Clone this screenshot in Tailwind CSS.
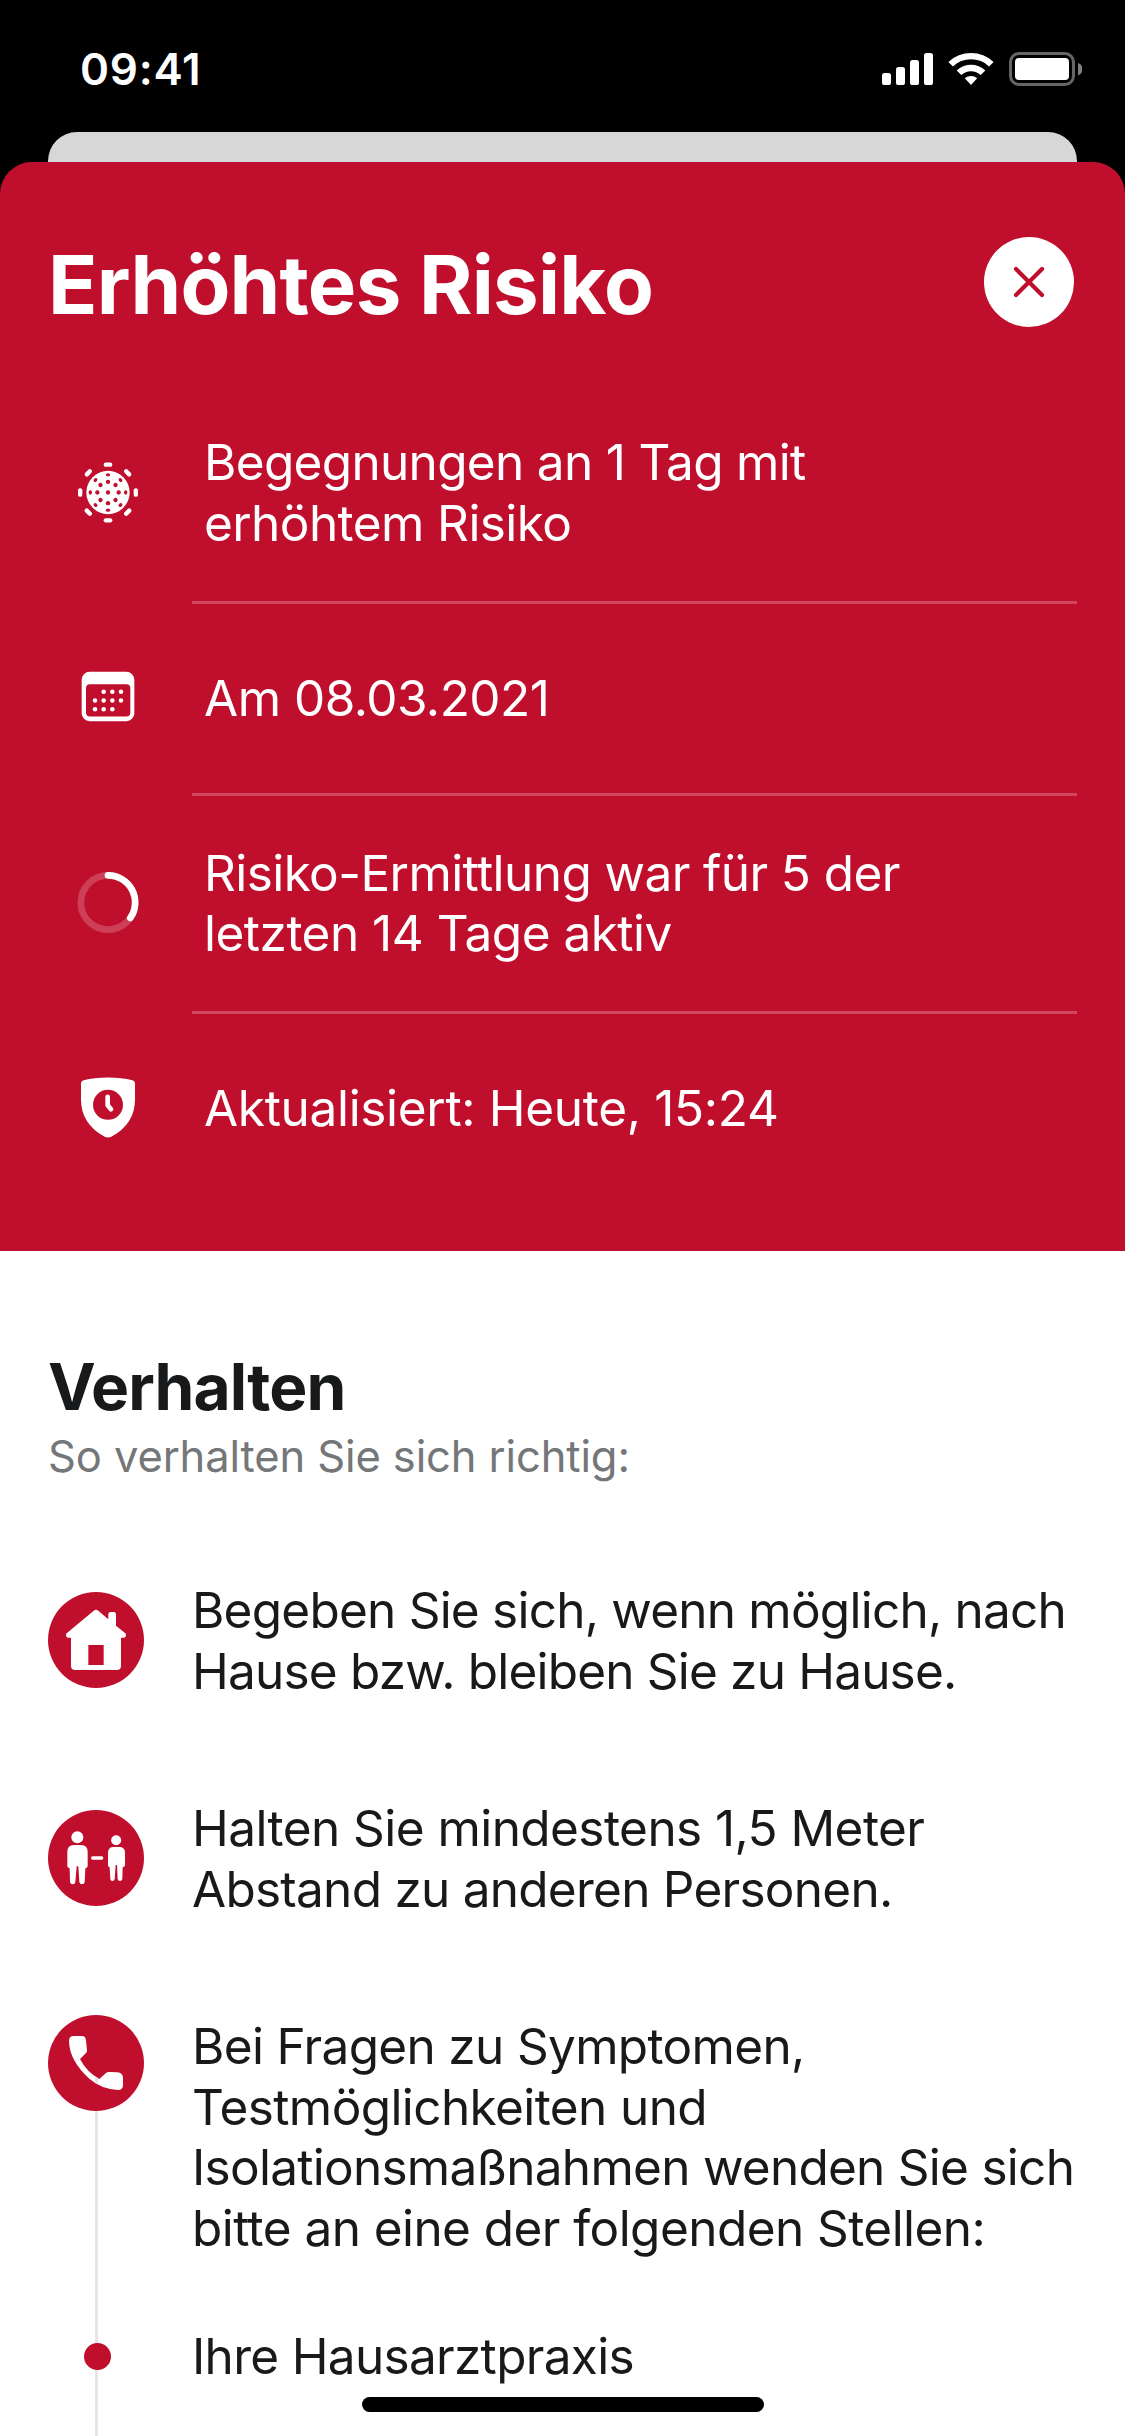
<!DOCTYPE html>
<html lang="de">
<head>
<meta charset="utf-8">
<title>Erhöhtes Risiko</title>
<script src="https://cdn.jsdelivr.net/npm/@tailwindcss/browser@4"></script>
</head>
<body class="bg-white">
<div class="relative w-[1125px] h-[2436px] overflow-hidden bg-white font-['Inter',sans-serif] text-[49.5px] leading-[60.5px] text-[#17191a] whitespace-nowrap">

  <div class="bg-black">
    <!-- Status bar -->
    <div class="flex h-[132px] items-start justify-between pl-20 pr-[43px]">
      <div class="mt-[39px] text-[44px] leading-[60px] font-semibold tracking-[0.75px] text-white">09:41</div>
      <svg class="mt-[50px] h-[40px] w-[204px]" viewBox="0 0 204 40">
        <g fill="#fff">
          <rect x="4" y="23" width="9" height="12" rx="2.6"/>
          <rect x="18" y="17" width="9" height="18" rx="2.6"/>
          <rect x="32" y="10" width="9" height="25" rx="2.6"/>
          <rect x="46" y="3" width="9" height="32" rx="2.6"/>
          <path d="M70.4 11.9A33 33 0 0 1 115.6 11.9L111.1 16.4A26.5 26.5 0 0 0 74.9 16.4Z"/>
          <path d="M78.7 20.4A21 21 0 0 1 107.3 20.4L102.7 25A14.2 14.2 0 0 0 83.3 25Z"/>
          <path d="M86.8 28.2A9.5 9.5 0 0 1 99.2 28.2L93 35Z"/>
          <rect x="137" y="8" width="54" height="22" rx="4"/>
        </g>
        <rect x="132.5" y="3.5" width="63" height="31" rx="8.5" fill="none" stroke="#666" stroke-width="3"/>
        <path d="M200 13a6.5 6.5 0 0 1 0 12.4z" fill="#808080"/>
      </svg>
    </div>
    <div class="mx-12 h-[30px] rounded-t-[29px] bg-[#d7d7d7]"></div>

    <!-- Risk header -->
    <div class="h-[1089px] rounded-t-[32px] bg-[#c00f2d] pt-[75px] text-white">
      <div class="flex h-[90px] items-center justify-between pl-12 pr-[51px]">
        <h1 class="pt-[5px] text-[81.5px] leading-[90px] font-bold tracking-[-0.77px]">Erhöhtes Risiko</h1>
        <svg class="size-[90px]" viewBox="0 0 90 90">
          <circle cx="45" cy="45" r="45" fill="#fff"/>
          <path d="M32 32L58 58M58 32L32 58" stroke="#c00f2d" stroke-width="4.2" stroke-linecap="round"/>
        </svg>
      </div>

      <div class="mt-[57px] pl-[78px] pr-12">
        <div class="flex h-[220px]">
          <svg class="mt-[78.5px] size-[60px] overflow-visible" viewBox="54 97.5 180 180">
            <circle cx="144" cy="186" r="65" fill="#fff"/>
            <g id="virus" transform="translate(144 186)"></g>
          </svg>
          <div class="ml-[54px] flex flex-1 flex-col justify-center border-b-[3px] border-[#cf4860] pl-3">
            <p class="tracking-[-0.68px]">Begegnungen an 1 Tag mit</p>
            <p class="tracking-[-0.58px]">erhöhtem Risiko</p>
          </div>
        </div>

        <div class="flex h-[192px]">
          <svg class="mt-[64.5px] size-[60px]" viewBox="54 85.5 180 180">
            <rect x="65" y="94" width="158" height="148" rx="24" fill="#fff"/>
            <rect x="78" y="131" width="133" height="97" rx="12" fill="#c00f2d"/>
            <g fill="#fff">
              <circle cx="131" cy="154" r="6.8"/><circle cx="157" cy="154" r="6.8"/><circle cx="183" cy="154" r="6.8"/>
              <circle cx="105" cy="180" r="6.8"/><circle cx="131" cy="180" r="6.8"/><circle cx="157" cy="180" r="6.8"/><circle cx="183" cy="180" r="6.8"/>
              <circle cx="105" cy="206" r="6.8"/><circle cx="131" cy="206" r="6.8"/><circle cx="157" cy="206" r="6.8"/>
            </g>
          </svg>
          <div class="ml-[54px] flex flex-1 flex-col justify-center border-b-[3px] border-[#cf4860] pl-3">
            <p class="tracking-[-0.5px]">Am 08.03.2021</p>
          </div>
        </div>

        <div class="flex h-[218px]">
          <svg class="mt-[77.5px] size-[60px] overflow-visible" viewBox="54 70.5 180 180" fill="none" stroke-width="20">
            <circle cx="144" cy="156" r="81.5" stroke="#cd3f57"/>
            <path d="M144 74.5A81.5 81.5 0 0 1 211 202.4" stroke="#fff" stroke-linecap="round"/>
          </svg>
          <div class="ml-[54px] flex flex-1 flex-col justify-center border-b-[3px] border-[#cf4860] pl-3 pb-px">
            <p class="tracking-[-0.58px]">Risiko-Ermittlung war für 5 der</p>
            <p class="tracking-[-0.5px]">letzten 14 Tage aktiv</p>
          </div>
        </div>

        <div class="flex h-[189px]">
          <svg class="mt-[64.5px] size-[60px] overflow-visible" viewBox="54 55.5 180 180">
            <path d="M144 51Q185 51 217 59Q225 61 225 70V117Q225 190 154 229Q144 233 134 229Q63 190 63 117V70Q63 61 71 59Q103 51 144 51Z" fill="#fff"/>
            <circle cx="144" cy="133" r="45" fill="#c00f2d"/>
            <path d="M143 109V134L153 146" fill="none" stroke="#fff" stroke-width="14" stroke-linecap="round" stroke-linejoin="round"/>
          </svg>
          <div class="ml-[54px] flex flex-1 flex-col justify-center pl-3">
            <p class="tracking-[-0.32px]">Aktualisiert: Heute, 15:24</p>
          </div>
        </div>
      </div>
    </div>
  </div>

  <!-- Behaviour -->
  <div class="px-12 pt-[96px]">
    <h2 class="text-[64px] leading-[80px] font-bold tracking-[-0.85px]">Verhalten</h2>
    <p class="mt-[2px] text-[43.5px] leading-[54px] tracking-[-0.11px] text-[#747678]">So verhalten Sie sich richtig:</p>

    <div class="mt-[97px] flex h-[122px] gap-12">
      <svg class="mt-3 size-24" viewBox="54 66 288 288">
        <circle cx="198" cy="210" r="144" fill="#c00f2d"/>
        <path d="M193 121Q198 117 203 121L235 148V133Q235 126 242 126H251Q258 126 258 133V167L286 190Q288 192 288 195Q288 203 280 203H273V287Q273 300 260 300H136Q123 300 123 287V203H116Q108 203 108 195Q108 192 110 190Z" fill="#fff"/>
        <rect x="175" y="225" width="46" height="60" fill="#c00f2d"/>
      </svg>
      <div>
        <p class="tracking-[-0.77px]">Begeben Sie sich, wenn möglich, nach</p>
        <p class="tracking-[-0.81px]">Hause bzw. bleiben Sie zu Hause.</p>
      </div>
    </div>

    <div class="mt-24 flex h-[122px] gap-12">
      <svg class="mt-3 size-24" viewBox="54 60 288 288">
        <circle cx="198" cy="204" r="144" fill="#c00f2d"/>
        <g fill="#fff">
          <circle cx="142" cy="142" r="18"/>
          <path d="M132 165H153Q173 165 173 186V228Q173 234 166 235L164 276Q163 283 156 283Q149 283 148 276L145 229H140L136 276Q135 283 128 283Q121 283 120 276L119 235Q112 234 112 228V186Q112 165 132 165Z"/>
          <circle cx="258.5" cy="151" r="15"/>
          <path d="M251 171H268Q285 171 285 188V226Q285 231 278 232L277 267Q276 273 270 273Q264 273 263 267L261 225H257L254 267Q253 273 247 273Q241 273 241 267L239 232Q234 231 234 226V188Q234 171 251 171Z"/>
          <rect x="183" y="199" width="37" height="10" rx="5"/>
        </g>
      </svg>
      <div>
        <p class="tracking-[-0.56px]">Halten Sie mindestens 1,5 Meter</p>
        <p class="tracking-[-0.74px]">Abstand zu anderen Personen.</p>
      </div>
    </div>

    <div class="mt-[95px] flex h-[421px] gap-12">
      <div class="flex w-24 flex-col">
        <svg class="size-24 shrink-0" viewBox="54 75 288 288">
          <defs>
            <clipPath id="handset"><path d="M131 138H155Q167 138 168 151L171 182Q171 186 168 189L150 207Q170 246 208 267L228 249Q231 246 237 246L262 247Q279 249 279 264V286Q279 300 264 300Q212 296 178 266Q118 212 117 153Q117 138 131 138Z"/></clipPath>
          </defs>
          <circle cx="198" cy="219" r="144" fill="#c00f2d"/>
          <g clip-path="url(#handset)">
            <rect x="54" y="75" width="288" height="288" fill="#fff"/>
            <rect x="195" y="219" width="9" height="144" fill="#e5e5e5"/>
          </g>
        </svg>
        <div class="relative ml-[47px] w-[3px] flex-1 bg-[#e5e5e5]">
          <div class="absolute top-[232px] -left-[11px] size-[27px] rounded-full bg-[#c00f2d]"></div>
        </div>
      </div>
      <div class="pt-px">
        <p class="tracking-[-0.67px]">Bei Fragen zu Symptomen,</p>
        <p class="tracking-[-0.6px]">Testmöglichkeiten und</p>
        <p class="tracking-[-0.73px]">Isolationsmaßnahmen wenden Sie sich</p>
        <p class="tracking-[-0.56px]">bitte an eine der folgenden Stellen:</p>
        <p class="mt-[68px] tracking-[-0.69px]">Ihre Hausarztpraxis</p>
      </div>
    </div>
  </div>

  <!-- Home indicator -->
  <div class="absolute bottom-6 left-[362px] h-[15px] w-[402px] rounded-full bg-black"></div>
</div>

<script>
  // Virus icon: eight spikes outside the body, two rings of dots and a centre dot on it.
  const g = document.getElementById('virus');
  let s = '<circle r="6.5" fill="#c00f2d"/>';
  for (let a = 0; a < 360; a += 45) {
    s += `<g transform="rotate(${a})"><rect x="-13" y="-90" width="26" height="13" rx="6.5" fill="#fff"/>` +
         `<circle cy="-32" r="6.5" fill="#c00f2d"/><ellipse cy="-53" rx="6.5" ry="5" fill="#c00f2d"/></g>`;
  }
  g.innerHTML = s;
</script>
</body>
</html>
